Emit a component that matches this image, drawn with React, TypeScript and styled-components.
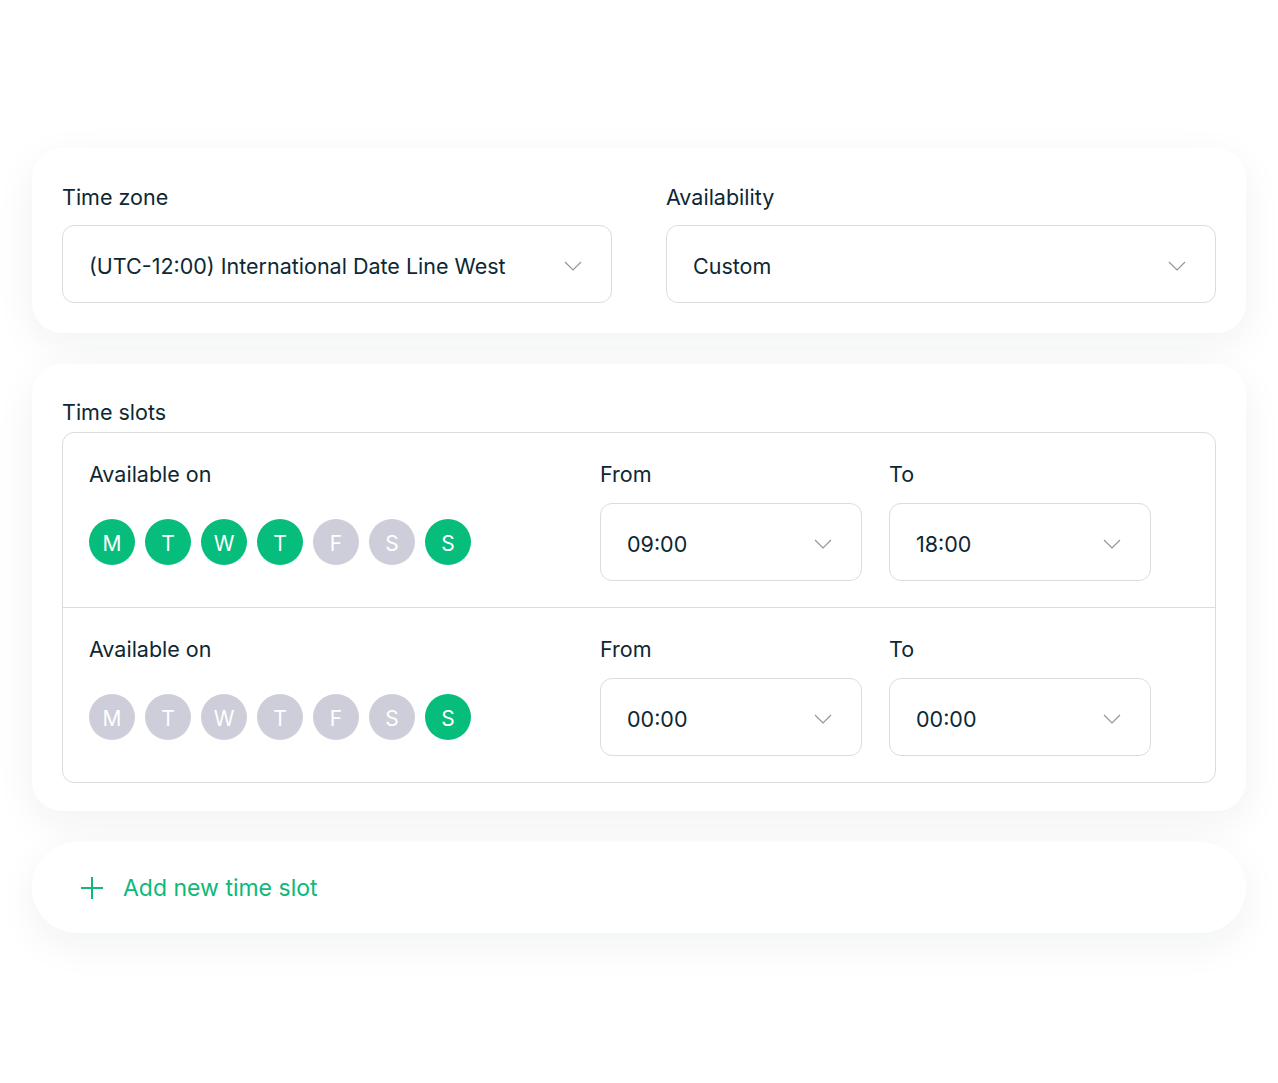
import React from "react";
import styled, { createGlobalStyle } from "styled-components";

const GlobalStyle = createGlobalStyle`
  body {
    margin: 0;
    background: #ffffff;
    font-family: Inter, "Noto Sans", sans-serif;
    color: #0c2833;
  }
`;

const Page = styled.div`
  width: 1278px;
  height: 1083px;
  padding: 148px 32px 0;
  box-sizing: border-box;
  display: flex;
  flex-direction: column;
  gap: 31px;
`;

const Card = styled.section<{ $pad: string }>`
  background: #ffffff;
  border-radius: 30px;
  box-shadow: 0 12px 40px rgba(20, 30, 40, 0.06);
  padding: ${(p) => p.$pad};
`;

const TopGrid = styled.div`
  display: grid;
  grid-template-columns: 1fr 1fr;
  column-gap: 54px;
`;

const Field = styled.div`
  display: flex;
  flex-direction: column;
  gap: 10px;
`;

const Label = styled.div`
  font-size: 21.5px;
  line-height: 36px;
  color: #0c2833;
`;

const RowLabel = styled(Label)`
  line-height: 28px;
`;

const Select = styled.div<{ $h: number }>`
  height: ${(p) => p.$h}px;
  box-sizing: border-box;
  border: 1.5px solid #dcdcdc;
  border-radius: 12px;
  display: flex;
  align-items: center;
  justify-content: space-between;
  padding: 4px 29px 0 26px;
  font-size: 21.5px;
  color: #0c2833;
`;

const SlotsLabel = styled(Label)`
  line-height: 34px;
  margin-bottom: 3px;
`;

const SlotsBox = styled.div`
  border: 1.5px solid #dcdcdc;
  border-radius: 12px;
  overflow: hidden;
`;

const SlotRow = styled.div`
  display: grid;
  grid-template-columns: 484px 262px 262px;
  column-gap: 27px;
  row-gap: 15px;
  padding: 27px 26px 26px;
  & + & {
    border-top: 1.5px solid #dcdcdc;
  }
`;

const Days = styled.div`
  display: flex;
  align-items: center;
  gap: 10px;
`;

const Day = styled.div<{ $on: boolean }>`
  width: 46px;
  height: 46px;
  border-radius: 50%;
  background: ${(p) => (p.$on ? "#06bd7c" : "#cdced9")};
  color: #ffffff;
  display: flex;
  align-items: center;
  justify-content: center;
  padding-top: 2px;
  box-sizing: border-box;
  font-size: 21px;
`;

const AddCard = styled.button`
  height: 91px;
  border: none;
  background: #ffffff;
  border-radius: 46px;
  box-shadow: 0 12px 40px rgba(20, 30, 40, 0.06);
  display: flex;
  align-items: center;
  gap: 19px;
  padding: 0 0 0 48px;
  font-family: inherit;
  font-size: 23px;
  color: #0fb878;
  cursor: pointer;
  text-align: left;
`;

const Chevron = () => (
  <svg width="18" height="10" viewBox="0 0 18 10" fill="none">
    <path d="M1 1l8 8 8-8" stroke="#8f9497" strokeWidth="1.1" />
  </svg>
);

const Plus = () => (
  <svg width="24" height="24" viewBox="0 0 24 24" fill="none">
    <path d="M12 1v22M1 12h22" stroke="#0fb878" strokeWidth="2" />
  </svg>
);

const dayLetters = ["M", "T", "W", "T", "F", "S", "S"];

type Slot = { days: boolean[]; from: string; to: string };

const slots: Slot[] = [
  { days: [true, true, true, true, false, false, true], from: "09:00", to: "18:00" },
  { days: [false, false, false, false, false, false, true], from: "00:00", to: "00:00" },
];

const App: React.FC = () => {
  return (
    <>
      <GlobalStyle />
      <Page>
        <Card $pad="31px 30px 30px">
          <TopGrid>
            <Field>
              <Label>Time zone</Label>
              <Select $h={78}>
                (UTC-12:00) International Date Line West
                <Chevron />
              </Select>
            </Field>
            <Field>
              <Label>Availability</Label>
              <Select $h={78}>
                Custom
                <Chevron />
              </Select>
            </Field>
          </TopGrid>
        </Card>
        <Card $pad="31px 30px 28px">
          <SlotsLabel>Time slots</SlotsLabel>
          <SlotsBox>
            {slots.map((slot, i) => (
              <SlotRow key={i}>
                <RowLabel>Available on</RowLabel>
                <RowLabel>From</RowLabel>
                <RowLabel>To</RowLabel>
                <Days>
                  {dayLetters.map((d, j) => (
                    <Day key={j} $on={slot.days[j]}>
                      {d}
                    </Day>
                  ))}
                </Days>
                <Select $h={78}>
                  {slot.from}
                  <Chevron />
                </Select>
                <Select $h={78}>
                  {slot.to}
                  <Chevron />
                </Select>
              </SlotRow>
            ))}
          </SlotsBox>
        </Card>
        <AddCard>
          <Plus />
          Add new time slot
        </AddCard>
      </Page>
    </>
  );
};

export default App;
